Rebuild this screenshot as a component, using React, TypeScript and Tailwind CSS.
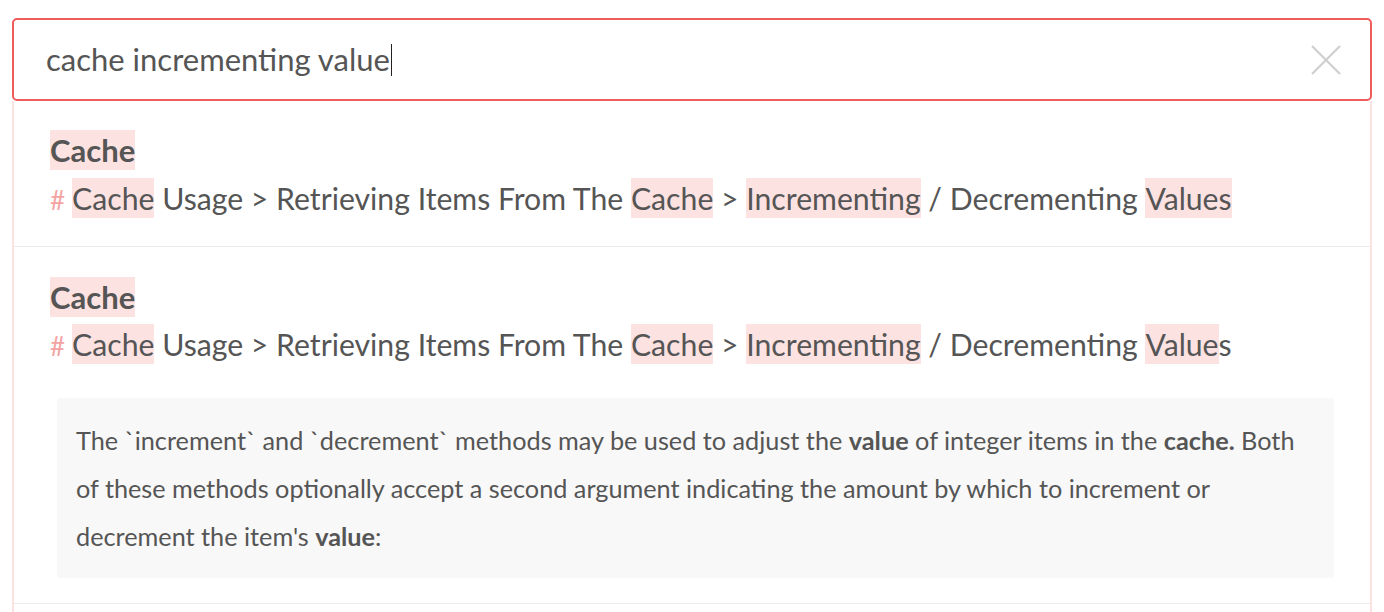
import type { ReactNode } from 'react';

const font = { fontFamily: 'Lato, "Open Sans", sans-serif' };

function Hl({ children }: { children: ReactNode }) {
  return <span className="inline-block bg-[#fde2e2] leading-[40px]">{children}</span>;
}

function Breadcrumb({ lastPartial }: { lastPartial?: boolean }) {
  return (
    <div className="h-[40px] leading-[40px] text-[30.2px] text-[#555] whitespace-nowrap">
      <span className="text-[#f4a3a3] text-[26px] mr-[7px]">#</span>
      <Hl>Cache</Hl> Usage &gt; Retrieving Items From The <Hl>Cache</Hl> &gt; <Hl>Incrementing</Hl> / Decrementing{' '}
      {lastPartial ? (
        <>
          <Hl>Value</Hl>s
        </>
      ) : (
        <Hl>Values</Hl>
      )}
    </div>
  );
}

function Title() {
  return (
    <div className="h-[40px] leading-[40px] text-[31px] font-bold text-[#555]">
      <Hl>Cache</Hl>
    </div>
  );
}

export default function App() {
  return (
    <div className="w-[1384px] h-[612px] bg-white overflow-hidden pt-[18px] px-[12px]" style={font}>
      <div className="h-[83px] border-2 border-[#f05b5b] rounded-[5px] flex items-center pl-[32px] pr-[28px]">
        <div className="flex-1 flex items-center text-[31px] text-[#555]">
          <span>cache incrementing value</span>
          <span className="inline-block w-px h-[32px] bg-[#222] ml-px" />
        </div>
        <svg width="32" height="32" viewBox="0 0 32 32" className="shrink-0">
          <path d="M2 2 L30 30 M30 2 L2 30" stroke="#cfcfcf" strokeWidth="2.2" fill="none" />
        </svg>
      </div>

      <div className="border-x-2 border-[#fde2e2]">
        <div className="pt-[29px] pb-[28px] px-[36px] border-b border-[#ebebeb] flex flex-col gap-[8px]">
          <Title />
          <Breadcrumb />
        </div>

        <div className="pt-[30px] pb-[25px] px-[36px] border-b border-[#ebebeb]">
          <div className="flex flex-col gap-[7px]">
            <Title />
            <Breadcrumb lastPartial />
          </div>
          <div className="mt-[34px] ml-[7px] bg-[#f8f8f8] rounded-[3px] px-[19px] py-[18px] text-[25.25px] leading-[48px] text-[#555] whitespace-nowrap">
            The `increment` and `decrement` methods may be used to adjust the <b>value</b> of integer items in the{' '}
            <b>cache.</b> Both
            <br />
            of these methods optionally accept a second argument indicating the amount by which to increment or
            <br />
            decrement the item's <b>value</b>:
          </div>
        </div>
        <div className="h-[20px]" />
      </div>
    </div>
  );
}
